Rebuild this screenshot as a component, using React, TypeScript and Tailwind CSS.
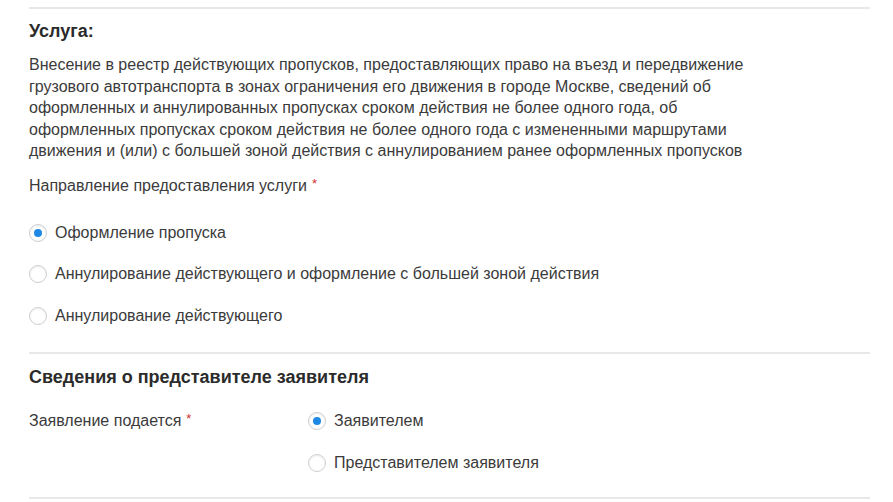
import React from "react";

function Radio({ checked, label }: { checked?: boolean; label: string }) {
  return (
    <label className="flex h-[20px] items-center">
      <span className="flex h-[18px] w-[18px] shrink-0 items-center justify-center rounded-full border border-[#cfcfcf] bg-white shadow-[inset_0_1px_2px_rgba(0,0,0,0.08)]">
        {checked && <span className="h-[8px] w-[8px] rounded-full bg-[#1e88e5]" />}
      </span>
      <span className="ml-[8px] text-[16px] leading-[20px] text-[#3b3b3b]">{label}</span>
    </label>
  );
}

function Required() {
  return <span className="ml-[5px] relative -top-[3px] text-[13px] text-[#d0312d]">*</span>;
}

export default function App() {
  return (
    <div
      className="min-h-[502px] w-[893px] bg-white"
      style={{ fontFamily: '"Liberation Sans", Arial, sans-serif' }}
    >
      <div className="ml-[29px] w-[841px] flex flex-col">
        <div className="mt-[7px] h-[2px] bg-[#e8e8e8]" />

        <h2 className="mt-[10px] text-[18px] font-bold leading-[24px] text-[#2b2b2b]">Услуга:</h2>
        <p className="mt-[11px] w-[745px] text-[16px] leading-[21.5px] text-[#3b3b3b]">
          Внесение в реестр действующих пропусков, предоставляющих право на въезд и передвижение грузового
          автотранспорта в зонах ограничения его движения в городе Москве, сведений об оформленных и
          аннулированных пропусках сроком действия не более одного года, об оформленных пропусках сроком
          действия не более одного года с измененными маршрутами движения и (или) с большей зоной действия с
          аннулированием ранее оформленных пропусков
        </p>

        <div className="mt-[13px] text-[16px] leading-[21px] text-[#3b3b3b]">
          Направление предоставления услуги
          <Required />
        </div>

        <div className="mt-[26px] flex flex-col gap-[21.5px]">
          <Radio checked label="Оформление пропуска" />
          <Radio label="Аннулирование действующего и оформление с большей зоной действия" />
          <Radio label="Аннулирование действующего" />
        </div>

        <div className="mt-[26px] h-[2px] bg-[#e8e8e8]" />

        <h2 className="mt-[11px] text-[18px] font-bold leading-[24px] text-[#2b2b2b]">
          Сведения о представителе заявителя
        </h2>

        <div className="mt-[22px] flex">
          <div className="w-[279px] text-[16px] leading-[20px] text-[#3b3b3b]">
            Заявление подается
            <Required />
          </div>
          <div className="flex flex-col gap-[22px]">
            <Radio checked label="Заявителем" />
            <Radio label="Представителем заявителя" />
          </div>
        </div>

        <div className="mt-[24px] h-[2px] bg-[#e8e8e8]" />
      </div>
    </div>
  );
}
